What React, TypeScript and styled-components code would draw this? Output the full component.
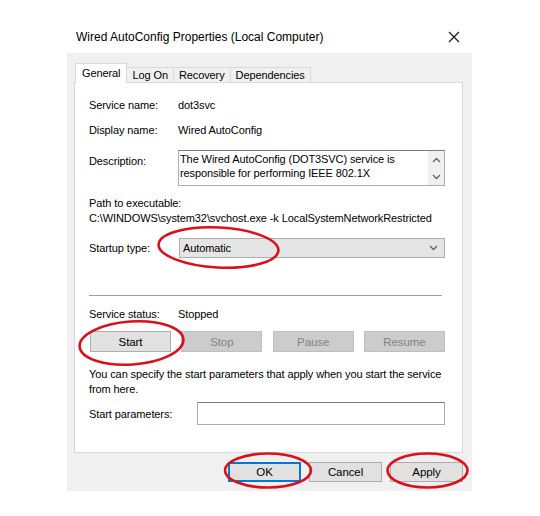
import React from 'react'
import styled, { createGlobalStyle } from 'styled-components'

const GlobalStyle = createGlobalStyle`
  html, body {
    margin: 0;
    padding: 0;
    background: #fff;
  }
  body {
    width: 540px;
    height: 516px;
    position: relative;
    font-family: 'Liberation Sans', Arial, sans-serif;
    font-size: 11px;
    letter-spacing: -0.1px;
    color: #000;
  }
`

const Page = styled.div`
  padding-top: 20px;
  padding-left: 67px;
`

const Window = styled.div`
  width: 405px;
  background: #f0f0f0;
`

const TitleBar = styled.div`
  height: 33px;
  background: #fff;
  display: flex;
  align-items: center;
  justify-content: space-between;
  padding: 0 9px 0 9px;
  font-size: 12px;
  letter-spacing: 0;
`

const CloseBtn = styled.svg`
  width: 12px;
  height: 12px;
  margin-right: 3px;
`

const Body = styled.div`
  padding: 10px 9px 9px 7px;
`

const TabStrip = styled.div`
  display: flex;
  align-items: flex-end;
  height: 20px;
  margin-left: 1px;
  margin-bottom: -1px;
  position: relative;
  z-index: 1;
`

const Tab = styled.div<{ $active?: boolean }>`
  height: ${({ $active }) => ($active ? 20 : 16)}px;
  padding: 0 ${({ $active }) => ($active ? 6 : 5)}px;
  margin-left: ${({ $active }) => ($active ? 0 : -1)}px;
  border: 1px solid #d9d9d9;
  border-bottom: ${({ $active }) => ($active ? 'none' : '1px solid #d9d9d9')};
  background: ${({ $active }) => ($active ? '#fff' : '#f0f0f0')};
  display: flex;
  align-items: center;
  box-sizing: border-box;
  padding-bottom: ${({ $active }) => ($active ? 2 : 0)}px;
`

const Panel = styled.div`
  background: #fff;
  border: 1px solid #d9d9d9;
  padding: 14px 17px 27px 14px;
  display: flex;
  flex-direction: column;
`

const Row = styled.div<{ $h: number; $mt: number }>`
  display: flex;
  align-items: center;
  height: ${({ $h }) => $h}px;
  margin-top: ${({ $mt }) => $mt}px;
`

const Label = styled.div<{ $w?: number }>`
  width: ${({ $w }) => $w ?? 89}px;
  flex-shrink: 0;
`

const TextLine = styled.div<{ $mt: number }>`
  line-height: 15px;
  white-space: nowrap;
  margin-top: ${({ $mt }) => $mt}px;
`

const DescRow = styled.div`
  display: flex;
  margin-top: 12px;
  height: 36px;
`

const DescLabel = styled.div`
  width: 89px;
  padding-top: 5px;
`

const DescBox = styled.div`
  flex: 1;
  border: 1px solid #abadb3;
  border-top-color: #7a7a7a;
  display: flex;
  box-sizing: border-box;
`

const DescText = styled.div`
  flex: 1;
  padding: 1px 0 0 1px;
  line-height: 14px;
`

const ScrollBar = styled.div`
  width: 16px;
  background: #f0f0f0;
  display: flex;
  flex-direction: column;
  justify-content: space-around;
  align-items: center;
`

const Combo = styled.div`
  flex: 1;
  margin-left: 1px;
  height: 20px;
  box-sizing: border-box;
  border: 1px solid #adadad;
  background: #e5e5e5;
  display: flex;
  align-items: center;
  justify-content: space-between;
  padding: 0 6px 0 3px;
`

const Separator = styled.div`
  height: 1px;
  background: #a0a0a0;
  margin: 37px 3px 0 0;
`

const ButtonRow = styled.div`
  display: flex;
  justify-content: space-between;
  margin-top: 9px;
  padding-left: 1px;
`

const SvcButton = styled.div<{ $disabled?: boolean }>`
  width: 81px;
  height: 21px;
  box-sizing: border-box;
  border: 1px solid ${({ $disabled }) => ($disabled ? '#bfbfbf' : '#adadad')};
  background: ${({ $disabled }) => ($disabled ? '#cccccc' : '#e1e1e1')};
  color: ${({ $disabled }) => ($disabled ? '#838383' : '#000')};
  display: flex;
  align-items: center;
  justify-content: center;
  font-size: 11.5px;
`

const InputBox = styled.div`
  flex: 1;
  height: 23px;
  box-sizing: border-box;
  border: 1px solid #7a7a7a;
  border-left-color: #abadb3;
  border-right-color: #abadb3;
  border-bottom-color: #abadb3;
`

const Footer = styled.div`
  display: flex;
  justify-content: flex-end;
  gap: 8px;
  margin-top: 9px;
`

const DlgButton = styled.div<{ $default?: boolean }>`
  width: 73px;
  height: 20px;
  box-sizing: border-box;
  border: ${({ $default }) => ($default ? '2px solid #0078d7' : '1px solid #adadad')};
  background: #e1e1e1;
  display: flex;
  align-items: center;
  justify-content: center;
  font-size: 11.5px;
`

const Marks = styled.svg`
  position: absolute;
  left: 0;
  top: 0;
  pointer-events: none;
`

const Chevron = ({ up }: { up?: boolean }) => (
  <svg width="9" height="6" viewBox="0 0 9 6">
    <path
      d={up ? 'M1 5 L4.5 1.5 L8 5' : 'M1 1 L4.5 4.5 L8 1'}
      fill="none"
      stroke="#606060"
      strokeWidth="1.3"
    />
  </svg>
)

const App = () => {
  return (
    <>
      <GlobalStyle />
      <Page>
        <Window>
          <TitleBar>
            <span>Wired AutoConfig Properties (Local Computer)</span>
            <CloseBtn viewBox="0 0 12 12">
              <path d="M1 1 L11 11 M11 1 L1 11" stroke="#111" strokeWidth="1.1" />
            </CloseBtn>
          </TitleBar>
          <Body>
            <TabStrip>
              <Tab $active>General</Tab>
              <Tab>Log On</Tab>
              <Tab>Recovery</Tab>
              <Tab>Dependencies</Tab>
            </TabStrip>
            <Panel>
              <Row $h={16} $mt={0}>
                <Label>Service name:</Label>
                <span>dot3svc</span>
              </Row>
              <Row $h={16} $mt={9}>
                <Label>Display name:</Label>
                <span>Wired AutoConfig</span>
              </Row>
              <DescRow>
                <DescLabel>Description:</DescLabel>
                <DescBox>
                  <DescText>
                    The Wired AutoConfig (DOT3SVC) service is
                    <br />
                    responsible for performing IEEE 802.1X
                  </DescText>
                  <ScrollBar>
                    <Chevron up />
                    <Chevron />
                  </ScrollBar>
                </DescBox>
              </DescRow>
              <TextLine $mt={10}>Path to executable:</TextLine>
              <TextLine $mt={0}>
                C:\WINDOWS\system32\svchost.exe -k LocalSystemNetworkRestricted
              </TextLine>
              <Row $h={20} $mt={12}>
                <Label>Startup type:</Label>
                <Combo>
                  <span>Automatic</span>
                  <Chevron />
                </Combo>
              </Row>
              <Separator />
              <Row $h={16} $mt={10}>
                <Label>Service status:</Label>
                <span>Stopped</span>
              </Row>
              <ButtonRow>
                <SvcButton>Start</SvcButton>
                <SvcButton $disabled>Stop</SvcButton>
                <SvcButton $disabled>Pause</SvcButton>
                <SvcButton $disabled>Resume</SvcButton>
              </ButtonRow>
              <TextLine $mt={15}>
                You can specify the start parameters that apply when you start the service
                <br />
                from here.
              </TextLine>
              <Row $h={23} $mt={5}>
                <Label $w={108}>Start parameters:</Label>
                <InputBox />
              </Row>
            </Panel>
            <Footer>
              <DlgButton $default>OK</DlgButton>
              <DlgButton>Cancel</DlgButton>
              <DlgButton>Apply</DlgButton>
            </Footer>
          </Body>
        </Window>
      </Page>
      <Marks width="540" height="516" viewBox="0 0 540 516">
        <g fill="none" stroke="#d8111b" strokeWidth="2.6">
          <ellipse cx="218.5" cy="247.5" rx="60" ry="20" transform="rotate(3 218.5 247.5)" />
          <ellipse cx="131.5" cy="343" rx="52" ry="21.5" transform="rotate(-4 131.5 343)" />
          <ellipse cx="268" cy="470.5" rx="43" ry="17" />
          <ellipse cx="427.5" cy="470.5" rx="40" ry="17" />
        </g>
      </Marks>
    </>
  )
}

export default App
